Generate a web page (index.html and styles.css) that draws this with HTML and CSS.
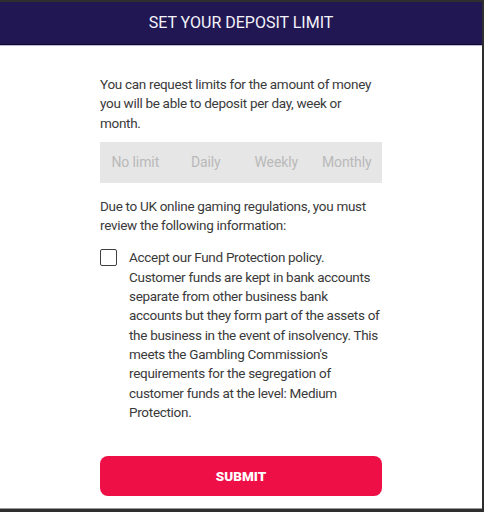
FILE: index.html
```html
<!DOCTYPE html>
<html>
<head>
<meta charset="utf-8">
<link rel="stylesheet" href="styles.css">
</head>
<body>
<div class="modal">
  <header class="modal-header">SET YOUR DEPOSIT LIMIT</header>
  <div class="modal-body">
    <p class="intro">You can request limits for the amount of money you will be able to deposit per day, week or month.</p>
    <div class="tabs">
      <span class="tab">No limit</span>
      <span class="tab">Daily</span>
      <span class="tab">Weekly</span>
      <span class="tab">Monthly</span>
    </div>
    <p class="notice">Due to UK online gaming regulations, you must review the following information:</p>
    <label class="check-row">
      <span class="checkbox"></span>
      <span class="check-text">Accept our Fund Protection policy. Customer funds are kept in bank accounts separate from other business bank accounts but they form part of the assets of the business in the event of insolvency. This meets the Gambling Commission's requirements for the segregation of customer funds at the level: Medium Protection.</span>
    </label>
    <button class="submit">SUBMIT</button>
  </div>
</div>
</body>
</html>
```
FILE: styles.css
```css
html, body {
  margin: 0;
  padding: 0;
}
body {
  background: #2e2e2e;
  width: 484px;
  height: 512px;
  overflow: hidden;
  font-family: Roboto, "Liberation Sans", sans-serif;
}
.modal {
  margin-top: 2px;
  width: 482px;
  height: 507px;
  background: #fff;
  border-bottom: 1px solid #9a9a9a;
  box-sizing: border-box;
  display: flex;
  flex-direction: column;
}
.modal-header {
  height: 42px;
  background: #211752;
  color: #f4f3fb;
  font-size: 16px;
  line-height: 42px;
  text-align: center;
  border-bottom: 1px solid #0e0a2c;
  box-shadow: 0 1px 0 #bdb9d9;
}
.modal-body {
  padding: 30px 100px 0 100px;
  display: flex;
  flex-direction: column;
  color: #3a3a3a;
  font-size: 13.5px;
  letter-spacing: -0.3px;
  line-height: 19.3px;
}
.intro, .notice {
  margin: 0;
}
.tabs {
  margin-top: 9px;
  height: 41px;
  background: #e6e6e6;
  display: grid;
  grid-template-columns: repeat(4, 1fr);
  align-items: center;
  text-align: center;
  color: #b9b9b9;
  font-size: 14px;
  letter-spacing: -0.1px;
}
.notice {
  margin-top: 14px;
}
.check-row {
  margin-top: 13px;
  display: flex;
  gap: 12px;
}
.checkbox {
  flex: none;
  width: 17px;
  height: 17px;
  box-sizing: border-box;
  border: 1.5px solid #3f3f3f;
  border-radius: 2px;
  margin-top: 1px;
}
.check-text {
  flex: 1;
}
.submit {
  margin-top: 34px;
  height: 40px;
  border: none;
  border-radius: 8px;
  background: #ee0f47;
  color: #fff;
  font-family: Roboto, "Liberation Sans", sans-serif;
  font-weight: 900;
  font-size: 13.5px;
  letter-spacing: 0;
}
```
